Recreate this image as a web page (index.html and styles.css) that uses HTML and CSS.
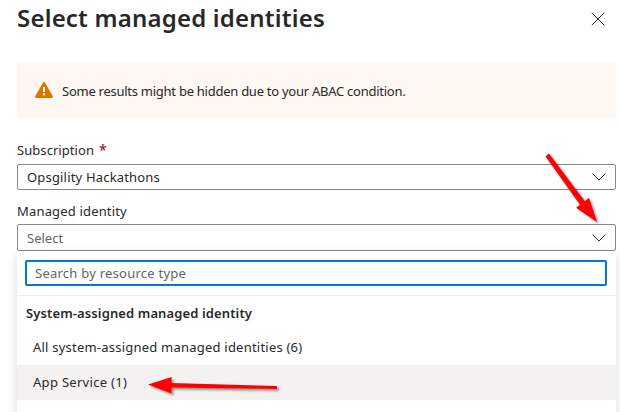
FILE: index.html
```html
<!DOCTYPE html>
<html lang="en">
<head>
<meta charset="utf-8">
<title>Select managed identities</title>
<link rel="stylesheet" href="styles.css">
</head>
<body>
<main class="panel">
  <header class="header">
    <h1 class="title"><span>Select managed identities</span></h1>
    <svg class="close" width="14" height="14" viewBox="0 0 14 14"><path d="M.7.7l12.6 12.6M13.3.7L.7 13.3"/></svg>
  </header>
  <div class="banner">
    <svg class="warning" width="18" height="16" viewBox="0 0 18 16"><path class="warning-shape" d="M7.9.7Q9-.6 10.1.7L17.7 14Q18.2 16 16.7 16H1.3Q-.2 16 .3 14Z"/><path class="warning-mark" d="M8 5h2v5H8zM8 11.3h2v2H8z"/></svg>
    <span class="banner-text">Some results might be hidden due to your ABAC condition.</span>
  </div>
  <div class="label"><span class="label-sub">Subscription</span><span class="required">*</span></div>
  <div class="select">
    <span class="value">Opsgility Hackathons</span>
    <svg class="chevron" width="14" height="8" viewBox="0 0 14 8"><path d="M.5.5L7 7 13.5.5"/></svg>
  </div>
  <div class="label label-second"><span class="label-identity">Managed identity</span></div>
  <div class="select select-open">
    <span class="placeholder">Select</span>
    <svg class="chevron" width="14" height="8" viewBox="0 0 14 8"><path d="M.5.5L7 7 13.5.5"/></svg>
  </div>
  <div class="dropdown">
    <div class="search-area"><div class="search"><span class="search-text">Search by resource type</span></div></div>
    <div class="group"><span>System-assigned managed identity</span></div>
    <div class="option"><span class="option-all">All system-assigned managed identities (6)</span></div>
    <div class="option option-hover"><span class="option-app">App Service (1)</span></div>
  </div>
</main>
<svg class="arrows" width="620" height="412" viewBox="0 0 620 412">
  <path d="M549 153.6L584.8 201.3 589 197.8 597 222 576 207.8 580 204.7 545.4 156.2Z"/>
  <path d="M148 384.5L171.5 377V383L277 386V389L171.5 387.5V393.5Z"/>
</svg>
</body>
</html>
```
FILE: styles.css
```css
* { box-sizing: border-box; }
body {
  margin: 0;
  height: 412px;
  overflow: hidden;
  background: #fff;
  color: #292827;
  font: 13px/18px "Noto Sans", "Open Sans", sans-serif;
}
span { white-space: nowrap; }
.panel { padding: 0 4px 0 17px; }
.header { display: flex; justify-content: space-between; height: 63px; padding-right: 11px; }
.title { margin: 2px 0 0; font-size: 24px; line-height: 32px; font-weight: 600; letter-spacing: .2px; }
.close { margin-top: 12px; fill: none; stroke: #323130; stroke-width: 1; }
.banner { display: flex; align-items: center; height: 55px; padding-left: 18px; border-radius: 2px; background: #fff7f1; }
.banner-text { letter-spacing: -.26px; }
.warning { margin: -2px 9px 0 0; }
.warning-shape { fill: #db7500; }
.warning-mark { fill: #fff; }
.label { display: flex; height: 46px; padding-top: 23px; }
.label-sub { letter-spacing: .06px; }
.label-second { height: 34px; padding-top: 12px; }
.label-identity { letter-spacing: .17px; }
.required { margin-left: 5px; color: #a4262c; font-size: 14px; font-weight: 600; }
.select { display: flex; align-items: center; justify-content: space-between; height: 26px; padding: 0 9px; border: 1px solid #8a8886; border-radius: 2px; }
.select-open { height: 27px; }
.value { letter-spacing: .18px; }
.placeholder, .search-text { color: #666462; }
.search-text { letter-spacing: .24px; }
.chevron { fill: none; stroke: #323130; stroke-width: 1; }
.dropdown { height: 170px; background: #fff; box-shadow: 0 4px 10px rgba(0,0,0,.15); }
.search-area { height: 45px; padding: 9px 9px 0 8px; border-bottom: 1px solid #edebe9; }
.search { display: flex; align-items: center; height: 26px; padding-left: 8px; border: 2px solid #0078d4; border-radius: 2px; }
.group { display: flex; align-items: center; height: 34px; padding-left: 9px; font-weight: 600; letter-spacing: .12px; }
.option { display: flex; align-items: center; height: 35px; padding: 0 0 2px 16px; }
.option-all { letter-spacing: .22px; }
.option-app { letter-spacing: .3px; }
.option-hover { background: #f3f2f1; }
.arrows { position: absolute; inset: 0; fill: #f00; filter: drop-shadow(2px 2px 1px rgba(0,0,0,.4)); }
```
